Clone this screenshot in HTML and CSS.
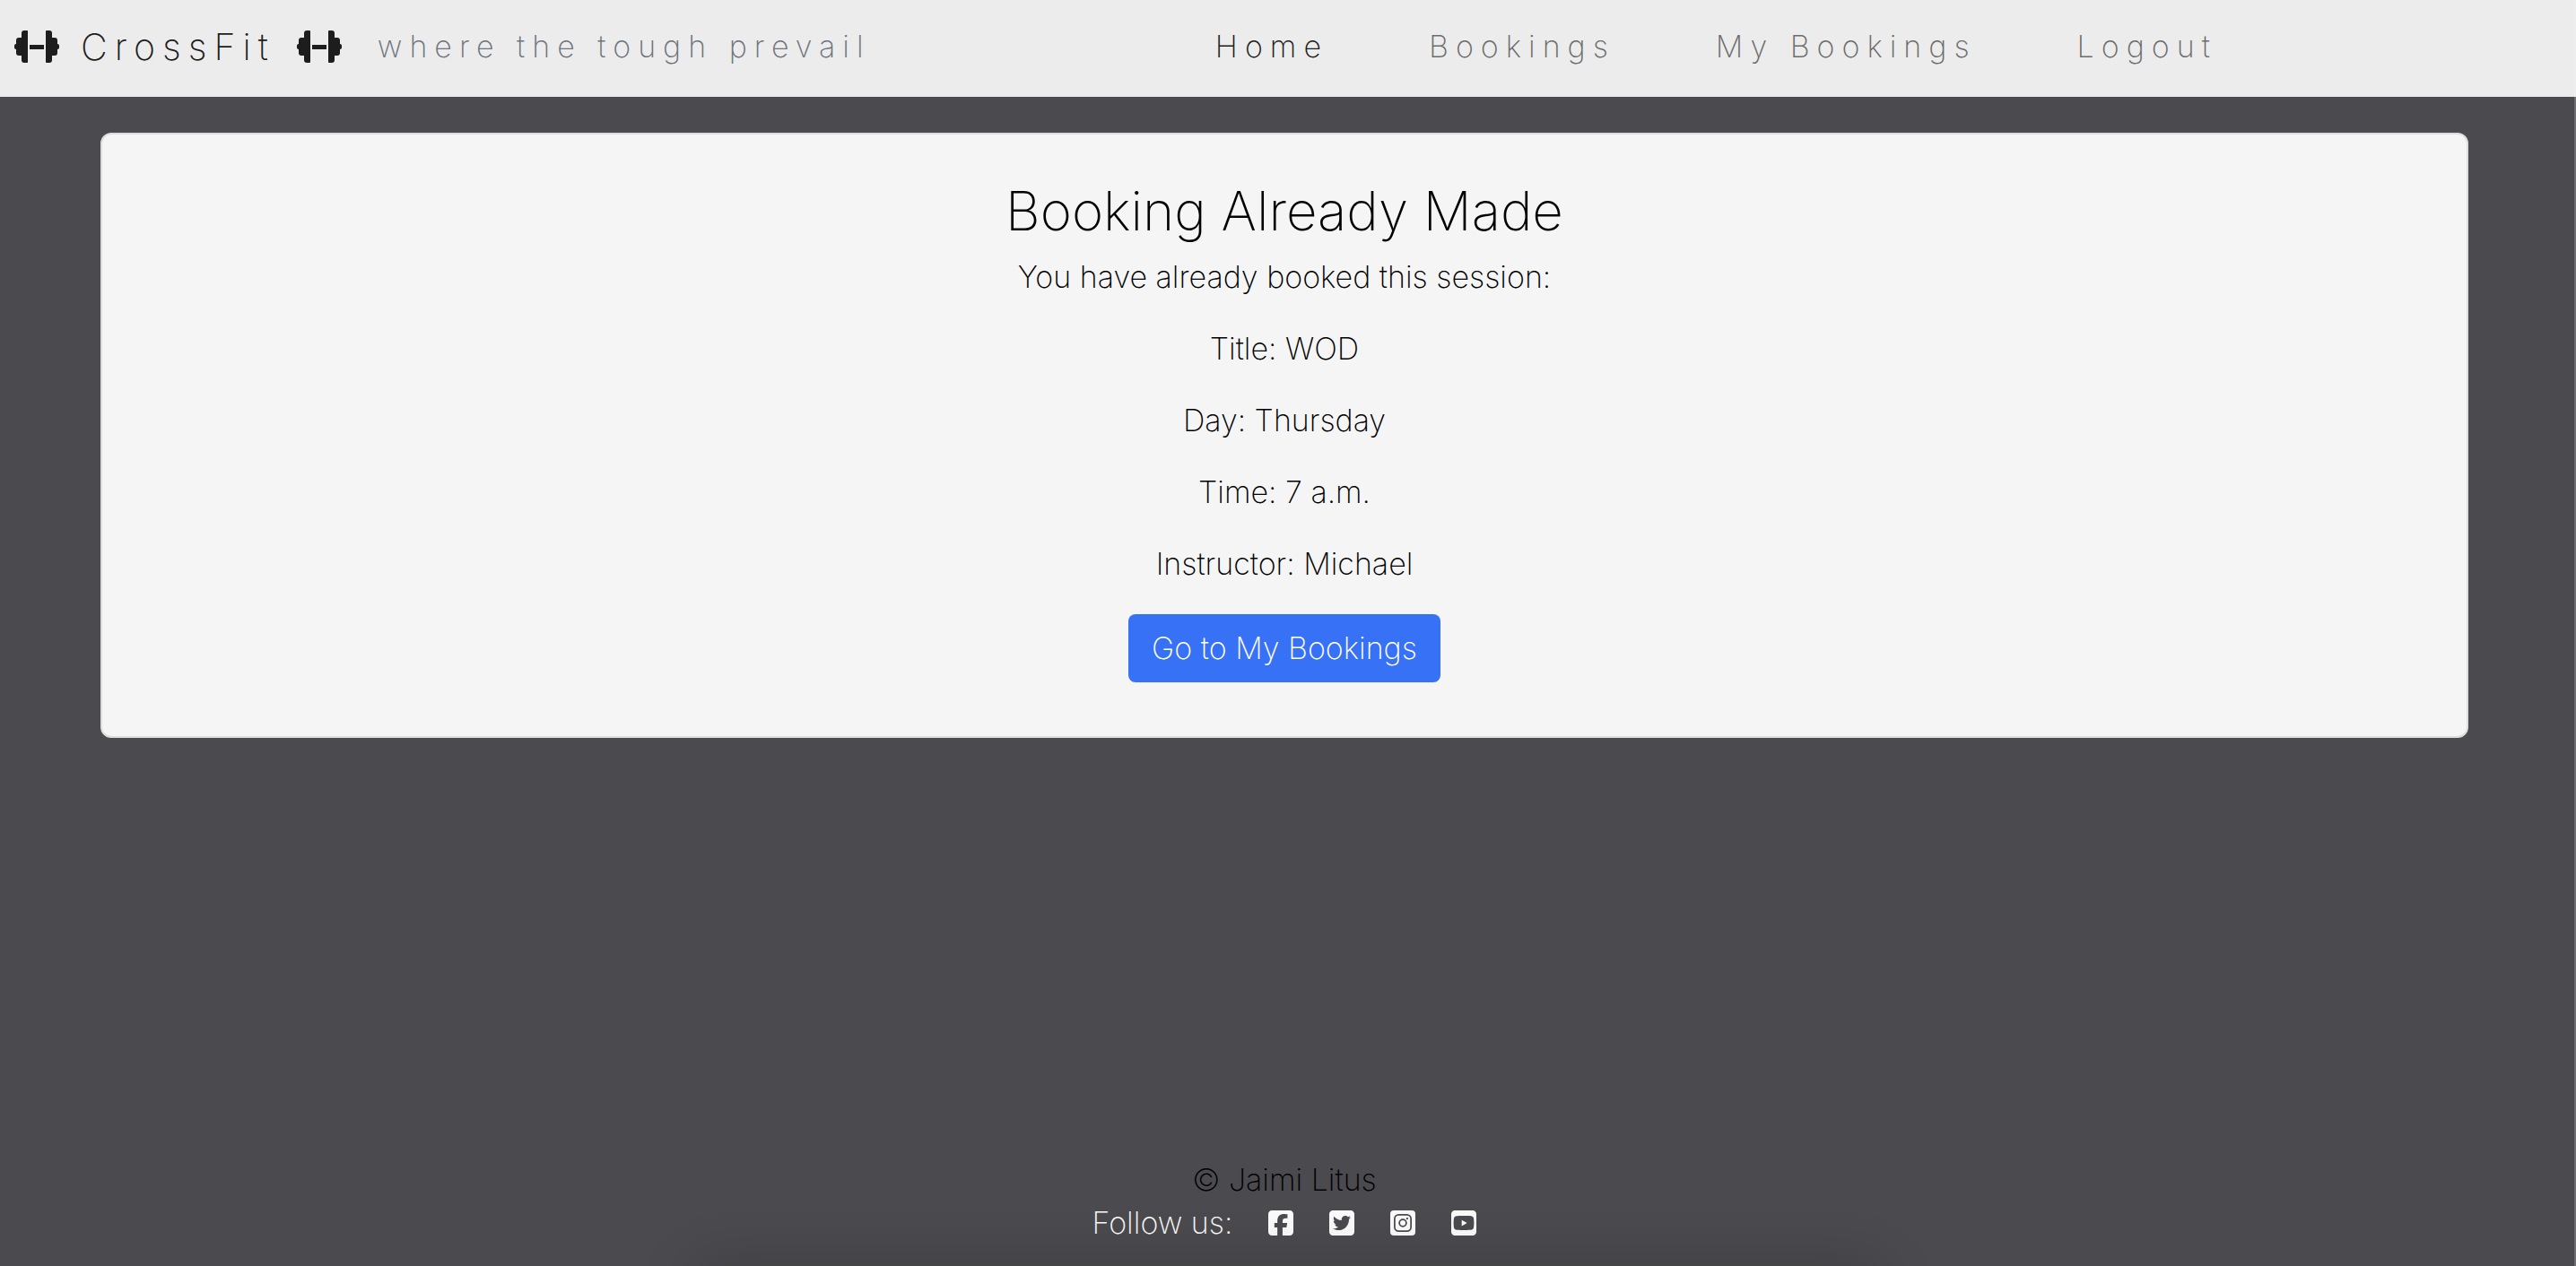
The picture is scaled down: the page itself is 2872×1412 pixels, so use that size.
FILE: index.html
```html
<!DOCTYPE html>
<html lang="en">
<head>
  <meta charset="utf-8">
  <meta name="viewport" content="width=device-width, initial-scale=1">
  <title>CrossFit - Booking Already Made</title>
  <link rel="stylesheet" href="styles.css">
</head>
<body>
  <svg class="sprite" aria-hidden="true">
    <symbol id="dumbbell" viewBox="0 0 50 36">
      <rect x="8" y="0" width="7" height="36" rx="3"/>
      <rect x="11" y="0" width="4" height="36" rx="1"/>
      <rect x="2" y="8" width="12" height="20" rx="3"/>
      <rect x="0" y="15" width="6" height="6" rx="2"/>
      <rect x="17" y="16" width="16" height="5"/>
      <rect x="35" y="0" width="7" height="36" rx="3"/>
      <rect x="35" y="0" width="4" height="36" rx="1"/>
      <rect x="36" y="8" width="12" height="20" rx="3"/>
      <rect x="44" y="15" width="6" height="6" rx="2"/>
    </symbol>
  </svg>

  <header class="navbar">
    <a class="brand" href="#">
      <svg class="dumbbell" aria-hidden="true"><use href="#dumbbell"/></svg>
      <span>CrossFit</span>
      <svg class="dumbbell" aria-hidden="true"><use href="#dumbbell"/></svg>
    </a>
    <span class="tagline">where the tough prevail</span>
    <nav class="menu">
      <a class="menu-link active" href="#">Home</a>
      <a class="menu-link" href="#">Bookings</a>
      <a class="menu-link" href="#">My Bookings</a>
      <a class="menu-link" href="#">Logout</a>
    </nav>
  </header>

  <main class="content">
    <section class="card">
      <h1 class="card-title">Booking Already Made</h1>
      <p class="card-text">You have already booked this session:</p>
      <p class="card-text">Title: WOD</p>
      <p class="card-text">Day: Thursday</p>
      <p class="card-text">Time: 7 a.m.</p>
      <p class="card-text">Instructor: Michael</p>
      <a class="button" href="#">Go to My Bookings</a>
    </section>
  </main>

  <footer class="footer">
    <p class="copyright">© Jaimi Litus</p>
    <div class="follow">
      <span class="follow-label">Follow us:</span>
      <a class="social" href="#" aria-label="Facebook"><svg viewBox="0 32 448 448"><path d="M64 32C28.7 32 0 60.7 0 96V416c0 35.300 28.700 64 64 64h98.200V334.200H109.400V256h52.800V222.300c0-87.100 39.400-127.500 125-127.500c16.200 0 44.200 3.200 55.700 6.400V172c-6-.6-16.500-1-29.600-1c-42 0-58.200 15.900-58.200 57.200V256h83.600l-14.400 78.200H255V480H384c35.300 0 64-28.700 64-64V96c0-35.300-28.700-64-64-64H64z"/></svg></a>
      <a class="social" href="#" aria-label="Twitter"><svg viewBox="0 32 448 448"><path fill-rule="evenodd" d="M64 32C28.700 32 0 60.700 0 96V416c0 35.300 28.700 64 64 64H384c35.300 0 64-28.700 64-64V96c0-35.300-28.700-64-64-64H64zM351.300 199.300v0c0 86.700-66 186.600-186.600 186.600c-37.200 0-71.700-10.800-100.700-29.400c5.300 .6 10.400 .8 15.800 .8c30.700 0 58.900-10.400 81.400-28c-28.800-.6-53-19.500-61.300-45.500c10.100 1.500 19.200 1.500 29.600-1.200c-30-6.100-52.500-32.500-52.500-64.400v-.8c8.700 4.900 18.900 7.900 29.600 8.300c-9-6-16.400-14.100-21.500-23.600s-7.800-20.200-7.700-31c0-12.200 3.200-23.400 8.900-33.100c32.300 39.800 80.800 65.800 135.200 68.600c-9.300-44.500 24-80.600 64-80.600c18.900 0 35.900 7.900 47.900 20.700c14.800-2.800 29-8.300 41.600-15.800c-4.900 15.200-15.200 28-28.800 36.100c13.200-1.400 26-5.100 37.800-10.200c-8.900 13.100-20.100 24.700-32.900 34c.2 2.800 .2 5.700 .2 8.500z"/></svg></a>
      <a class="social" href="#" aria-label="Instagram"><svg viewBox="0 0 448 448"><rect width="448" height="448" rx="64"/><g class="cut-line"><rect x="78" y="78" width="292" height="292" rx="74"/><circle cx="224" cy="224" r="62"/></g><circle class="cut" cx="302" cy="146" r="18"/></svg></a>
      <a class="social" href="#" aria-label="YouTube"><svg viewBox="0 32 448 448"><path fill-rule="evenodd" d="M282 256.200l-95.200-54.100V310.300L282 256.200zM384 32H64C28.700 32 0 60.700 0 96V416c0 35.300 28.700 64 64 64H384c35.300 0 64-28.700 64-64V96c0-35.300-28.700-64-64-64zm14.400 136.100c7.600 28.600 7.600 88.200 7.600 88.200s0 59.600-7.600 88.100c-4.200 15.800-16.500 27.700-32.200 31.900C337.900 384 224 384 224 384s-113.900 0-142.200-7.600c-15.700-4.200-28-16.100-32.200-31.900C42 315.900 42 256.300 42 256.300s0-59.700 7.600-88.200c4.200-15.800 16.500-28.200 32.200-32.400C110.100 128 224 128 224 128s113.900 0 142.200 7.700c15.700 4.200 28 16.600 32.200 32.400z"/></svg></a>
    </div>
  </footer>
</body>
</html>
```
FILE: styles.css
```css
* {
  box-sizing: border-box;
}

body {
  display: flex;
  flex-direction: column;
  min-height: 100vh;
  margin: 0;
  background: #4b4a4e;
  color: #000;
  font-family: Inter, "Open Sans", sans-serif;
  font-size: 34px;
  font-weight: 200;
  line-height: 48px;
}

/* Thin light strip along the right edge of the window */
body::after {
  content: "";
  position: fixed;
  top: 0;
  right: 0;
  bottom: 0;
  width: 2px;
  background: rgba(255, 255, 255, 0.2);
}

a {
  color: inherit;
  text-decoration: none;
}

.sprite {
  display: none;
}

/* Top bar */

.navbar {
  display: flex;
  align-items: center;
  height: 108px;
  padding: 0 16px 4px;
  background: #ececec;
  letter-spacing: 8px;
}

.brand {
  display: flex;
  align-items: center;
  gap: 24px;
  color: #1d1d1d;
  font-size: 41px;
}

.dumbbell {
  width: 50px;
  height: 36px;
  fill: currentColor;
}

.tagline {
  margin-left: 40px;
  color: #6c757d;
}

.menu {
  display: flex;
  gap: 112px;
  margin: 0 auto;
}

.menu-link {
  color: #6c6c6c;
}

.menu-link.active {
  color: #1d1d1d;
}

/* Message card */

.content {
  flex: 1;
  padding: 40px 120px 40px 112px;
}

.card {
  display: flex;
  flex-direction: column;
  align-items: center;
  padding: 52px 32px 60px;
  border: 2px solid #dcdddf;
  border-radius: 12px;
  background: #f5f5f5;
  text-align: center;
}

.card-title {
  margin: 0 0 16px;
  font-size: 60px;
  font-weight: 200;
  line-height: 67px;
}

.card-text {
  margin: 0 0 32px;
}

.button {
  padding: 14px 26px;
  border-radius: 8px;
  background: #3671f6;
  color: #fff;
}

/* Footer */

.footer {
  position: relative;
  padding: 0 8px 24px 0;
  overflow: hidden;
  text-align: center;
}

/* Soft shade rising from the bottom edge */
.footer::after {
  content: "";
  position: absolute;
  top: 100%;
  left: 27%;
  right: 27%;
  height: 40px;
  box-shadow: 0 0 64px rgba(0, 0, 0, 0.2);
}

.copyright {
  margin: 0;
}

.follow {
  display: flex;
  align-items: center;
  justify-content: center;
  gap: 40px;
  color: #fafafa;
}

.social svg {
  display: block;
  width: 28px;
  height: 28px;
  fill: currentColor;
}

.social .cut-line {
  fill: none;
  stroke: #4b4a4e;
  stroke-width: 28;
}

.social .cut {
  fill: #4b4a4e;
}
```
